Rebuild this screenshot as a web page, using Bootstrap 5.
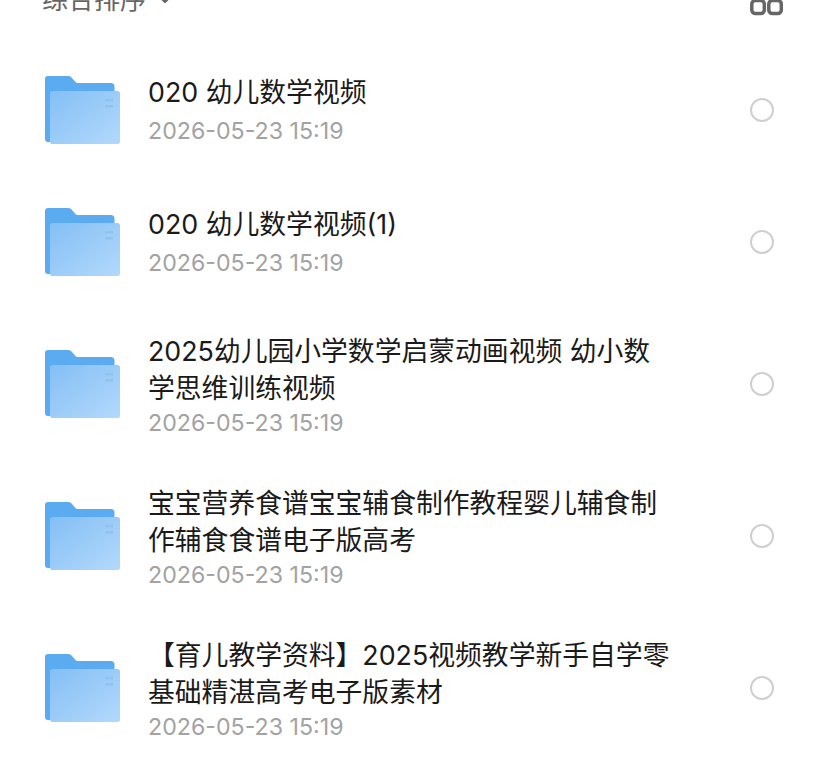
<!DOCTYPE html>
<html lang="zh-CN">

<head>
    <meta charset="UTF-8">
    <meta name="viewport" content="width=device-width, initial-scale=1.0">
    <title>文件列表</title>
    <link href="https://cdn.jsdelivr.net/npm/bootstrap@5.3.3/dist/css/bootstrap.min.css" rel="stylesheet">
    <style>
        html, body { height: 764px; overflow: hidden; background: #fff; }
        body { font-family: Inter, "Noto Sans CJK SC", sans-serif; }

        .sort-bar { height: 74px; margin-top: -30px; padding: 0 45px 0 42px; }
        .sort-label { font-size: 26px; color: #666; line-height: 32px; margin-top: 14px; }
        .sort-caret { margin-left: 13px; margin-top: 26px; }
        .view-icon { margin-top: 12px; }

        .file-row { padding-left: 45px; padding-right: 54px; }
        .file-row.one-line { height: 132px; }
        .file-row.two-line { height: 152px; }
        .file-info { margin-left: 28px; width: 528px; }
        .two-line .file-info { padding-top: 1px; }
        .one-line .file-info { padding-bottom: 2px; }
        .file-name { font-size: 26.8px; line-height: 37px; color: #1a1a1a; }
        .file-date { font-size: 23.2px; line-height: 28px; color: #a3a3a3; margin-top: 2px; }
        .one-line .file-date { margin-top: 6px; }
        .pick-circle { width: 24px; height: 24px; border: 2px solid #cfcfcf; border-radius: 50%; margin-bottom: 1px; }
    </style>
</head>

<body>

    <!-- 排序栏 -->
    <div class="sort-bar d-flex align-items-start">
        <span class="sort-label">综合排序</span>
        <svg class="sort-caret" width="12" height="8" viewBox="0 0 12 8"><path d="M1.5 1.5 6 6l4.5-4.5" fill="none" stroke="#666" stroke-width="2.2" stroke-linecap="round" stroke-linejoin="round"/></svg>
        <svg class="view-icon ms-auto" width="33" height="34" viewBox="0 0 33 34">
            <rect x="1.8" y="18.5" width="12.5" height="13" rx="3.5" fill="none" stroke="#666" stroke-width="3.5"/>
            <rect x="18.8" y="18.5" width="12.5" height="13" rx="3.5" fill="none" stroke="#666" stroke-width="3.5"/>
        </svg>
    </div>

    <!-- 文件夹列表 -->
    <div id="fileList"></div>

    <script>
        const files = [
            { name: '020 幼儿数学视频', rowClass: 'one-line' },
            { name: '020 幼儿数学视频(1)', rowClass: 'one-line' },
            { name: '2025幼儿园小学数学启蒙动画视频 幼小数学思维训练视频', rowClass: 'two-line' },
            { name: '宝宝营养食谱宝宝辅食制作教程婴儿辅食制作辅食食谱电子版高考', rowClass: 'two-line' },
            { name: '【育儿教学资料】2025视频教学新手自学零基础精湛高考电子版素材', rowClass: 'two-line' }
        ];

        const folderIcon = (i) => `
            <svg width="75" height="68" viewBox="0 0 75 68" class="flex-shrink-0">
                <defs>
                    <linearGradient id="front${i}" x1="0" y1="0" x2="1" y2="1">
                        <stop offset="0" stop-color="#84bff4"/>
                        <stop offset="1" stop-color="#b3d9fc"/>
                    </linearGradient>
                </defs>
                <path d="M3 0H23c2 0 3 .8 4.200 2.200L30 5.500c1 1 2 1.500 3.500 1.500H66c2 0 3.500 1.500 3.500 3.500V66H3c-2 0-3-1.300-3-3V3C0 1.300 1.300 0 3 0Z" fill="#5aabf0"/>
                <rect x="5" y="15" width="70" height="53" rx="2.500" fill="url(#front${i})"/>
                <rect x="60" y="23" width="8" height="2.500" fill="#90c3ef"/>
                <rect x="60" y="29" width="8" height="2.500" fill="#90c3ef"/>
            </svg>`;

        document.getElementById('fileList').innerHTML = files.map((file, i) => `
            <div class="file-row ${file.rowClass} d-flex align-items-center">
                ${folderIcon(i)}
                <div class="file-info">
                    <div class="file-name">${file.name}</div>
                    <div class="file-date">2026-05-23 15:19</div>
                </div>
                <div class="pick-circle ms-auto flex-shrink-0"></div>
            </div>`).join('');
    </script>

    <script src="https://cdn.jsdelivr.net/npm/bootstrap@5.3.3/dist/js/bootstrap.bundle.min.js"></script>

</body>

</html>
